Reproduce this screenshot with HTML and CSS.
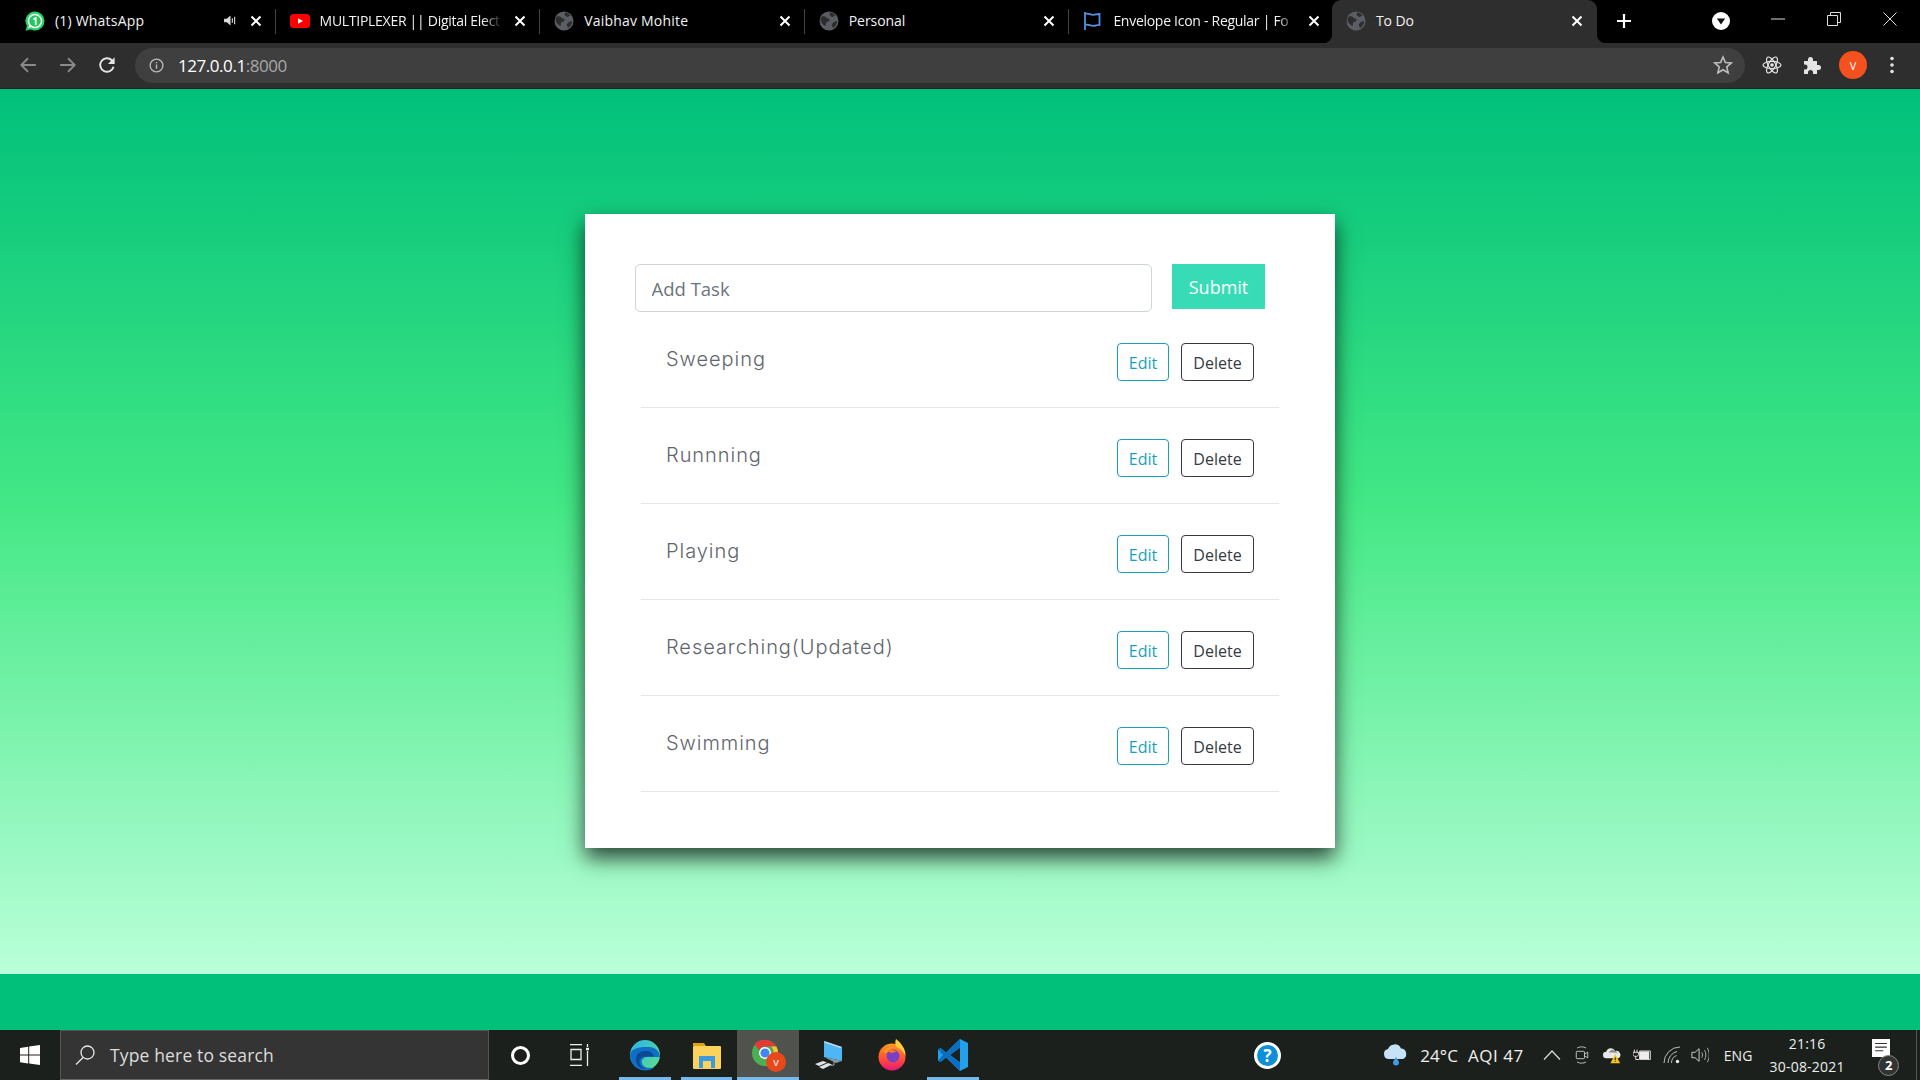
FILE: index.html
```html
<!DOCTYPE html>
<html lang="en">
<head>
<meta charset="utf-8">
<title>To Do</title>
<link rel="stylesheet" href="styles.css">
</head>
<body>
<svg class="defs" width="0" height="0" aria-hidden="true">
  <symbol id="globe" viewBox="0 0 20 20">
    <circle cx="10" cy="10" r="9.5" fill="#5a5d61"/>
    <path d="M3 5.5c2-.5 3.5.2 4.5 1.2s2.800.5 3 2-1.200 2-2.500 2.300-1 2.500-1.200 4C4.500 14.500 2 12 1.500 9c0-1.500.7-2.700 1.500-3.500zM11 1.500c2 0 4.500 1.500 5.500 3l-3 1.500c-1-.5-2.500-1-2.800-2.300zM18 10c.3 3-1.500 5.500-4 7l-1.300-3c.3-1.500 1.500-3 5.300-4z" fill="#2c2d2f"/>
  </symbol>
  <symbol id="close" viewBox="0 0 12 12">
    <path d="M1.500 1.500l9 9M10.500 1.500l-9 9" stroke="#fff" stroke-width="2" fill="none"/>
  </symbol>
</svg>
<div class="app">
  <header class="tabstrip">
    <div class="tab sep">
      <svg class="fav" viewBox="0 0 20 20"><path d="M10 .5a9.500 9.500 0 0 1 0 19c-1.500 0-3-.4-4.400-1.100L.5 19.800l1.400-4.900A9.500 9.500 0 0 1 10 .5z" fill="#27d366"/><path d="M10 2.800a7.200 7.200 0 1 1-3.700 13.400l-3 .8.8-2.900A7.200 7.200 0 0 1 10 2.800z" fill="#fff"/><circle cx="10" cy="10" r="5.800" fill="#25c45c"/></svg>
      <span class="wa-count">1</span>
      <span class="title wide">(1) WhatsApp</span>
      <svg class="speaker" viewBox="0 0 14 12"><path d="M0 4h3l4-3.500v11L3 8H0z" fill="#ddd"/><path d="M9 3.500v5M11.500 2v8" stroke="#ddd" stroke-width="1.200"/></svg>
      <svg class="x"><use href="#close"/></svg>
    </div>
    <div class="tab sep">
      <svg class="fav" viewBox="0 0 20 14"><rect width="20" height="14" rx="3.500" fill="#f00"/><path d="M8 4.200l5 2.800-5 2.800z" fill="#fff"/></svg>
      <span class="title fade tight">MULTIPLEXER || Digital Elect</span>
      <svg class="x"><use href="#close"/></svg>
    </div>
    <div class="tab sep">
      <svg class="fav"><use href="#globe"/></svg>
      <span class="title wide">Vaibhav Mohite</span>
      <svg class="x"><use href="#close"/></svg>
    </div>
    <div class="tab sep">
      <svg class="fav"><use href="#globe"/></svg>
      <span class="title">Personal</span>
      <svg class="x"><use href="#close"/></svg>
    </div>
    <div class="tab">
      <svg class="fav" viewBox="0 0 20 20"><path d="M2 1v18M2 3c3-1.500 5 .8 8 .8s4-1 6.500-.8v11c-2.500-.3-3.500.8-6.500.8s-5-2.300-8-.8" stroke="#5590e0" stroke-width="1.800" fill="none"/></svg>
      <span class="title fade tight">Envelope Icon - Regular | Fo</span>
      <svg class="x"><use href="#close"/></svg>
    </div>
    <div class="tab active">
      <svg class="fav"><use href="#globe"/></svg>
      <span class="title">To Do</span>
      <svg class="x"><use href="#close"/></svg>
    </div>
    <svg class="newtab" viewBox="0 0 16 16"><path d="M8 1v14M1 8h14" stroke="#fff" stroke-width="2.200"/></svg>
    <svg class="tabsearch" viewBox="0 0 18 18"><circle cx="9" cy="9" r="9" fill="#fff"/><path d="M4.800 6.500h8.400L9 12.500z" fill="#111"/></svg>
    <div class="winctl">
      <svg viewBox="0 0 14 14"><path d="M0 7h14" stroke="#ddd" stroke-width="1"/></svg>
      <svg viewBox="0 0 14 14"><path d="M.5 3.500h10v10H.5zM3.500 3.500v-3h10v10h-3" stroke="#ddd" stroke-width="1" fill="none"/></svg>
      <svg viewBox="0 0 14 14"><path d="M.5.500l13 13M13.500.500l-13 13" stroke="#ddd" stroke-width="1"/></svg>
    </div>
  </header>

  <nav class="toolbar">
    <svg class="nav-ic dim" viewBox="0 0 16 16"><path d="M15 8H2M8 2L2 8l6 6" stroke="#8a8a8a" stroke-width="1.600" fill="none"/></svg>
    <svg class="nav-ic dim" viewBox="0 0 16 16"><path d="M1 8h13M8 2l6 6-6 6" stroke="#8a8a8a" stroke-width="1.600" fill="none"/></svg>
    <svg class="nav-ic" viewBox="0 0 16 16"><path d="M13.800 9.500A6 6 0 1 1 12.300 3.800L14 6" stroke="#e4e4e4" stroke-width="1.700" fill="none"/><path d="M14.800 1v6h-6z" fill="#e4e4e4"/></svg>
    <div class="omnibox">
      <svg class="info" viewBox="0 0 16 16"><circle cx="8" cy="8" r="6.800" stroke="#bbb" stroke-width="1.400" fill="none"/><path d="M8 7v4.500M8 4.200v1.500" stroke="#bbb" stroke-width="1.500"/></svg>
      <span class="url">127.0.0.1<span class="port">:8000</span></span>
      <svg class="star" viewBox="0 0 20 20"><path d="M10 2l2.400 5.500 5.800.5-4.400 3.900 1.300 5.900-5.100-3.100-5.100 3.100 1.300-5.900L1.800 8l5.800-.5z" stroke="#bdbdbd" stroke-width="1.600" fill="none"/></svg>
    </div>
    <svg class="ext react" viewBox="0 0 20 20"><g stroke="#e4e4e4" stroke-width="1.200" fill="none"><ellipse cx="10" cy="10" rx="9" ry="3.600"/><ellipse cx="10" cy="10" rx="9" ry="3.600" transform="rotate(60 10 10)"/><ellipse cx="10" cy="10" rx="9" ry="3.600" transform="rotate(120 10 10)"/></g><circle cx="10" cy="10" r="1.800" fill="#e4e4e4"/></svg>
    <svg class="ext puzzle" viewBox="0 0 20 20"><path d="M2 6h4V4.500a2.500 2.500 0 0 1 5 0V6h4v4h1.500a2.500 2.500 0 0 1 0 5H15v4h-4v-1.500a2.500 2.500 0 0 0-5 0V19H2v-4.500h1a2.500 2.500 0 0 0 0-5H2z" fill="#e4e4e4"/></svg>
    <div class="avatar">V</div>
    <svg class="menu" viewBox="0 0 4 18"><circle cx="2" cy="2.500" r="1.800" fill="#e4e4e4"/><circle cx="2" cy="9" r="1.800" fill="#e4e4e4"/><circle cx="2" cy="15.500" r="1.800" fill="#e4e4e4"/></svg>
  </nav>

  <main class="page">
    <section class="stage">
      <div class="card">
        <form class="task-form">
          <input class="task-input" type="text" placeholder="Add Task">
          <button class="submit" type="button">Submit</button>
        </form>
        <ul class="task-list">
          <li class="task"><span class="task-name">Sweeping</span><button class="btn edit" type="button">Edit</button><button class="btn del" type="button">Delete</button></li>
          <li class="task"><span class="task-name">Runnning</span><button class="btn edit" type="button">Edit</button><button class="btn del" type="button">Delete</button></li>
          <li class="task"><span class="task-name">Playing</span><button class="btn edit" type="button">Edit</button><button class="btn del" type="button">Delete</button></li>
          <li class="task"><span class="task-name">Researching(Updated)</span><button class="btn edit" type="button">Edit</button><button class="btn del" type="button">Delete</button></li>
          <li class="task"><span class="task-name">Swimming</span><button class="btn edit" type="button">Edit</button><button class="btn del" type="button">Delete</button></li>
        </ul>
      </div>
    </section>
    <div class="foot"></div>
  </main>

  <footer class="taskbar">
    <div class="start"><svg viewBox="0 0 20 20"><path d="M0 2.900l8.200-1.200v7.900H0zM9.200 1.500L20 0v9.600H9.200zM0 10.500h8.200v7.900L0 17.200zM9.200 10.500H20V20L9.200 18.500z" fill="#fff"/></svg></div>
    <div class="search">
      <svg viewBox="0 0 20 20"><circle cx="12.500" cy="7.500" r="6.500" stroke="#e8e8e8" stroke-width="1.300" fill="none"/><path d="M8 12.500L1 19.500" stroke="#e8e8e8" stroke-width="1.300"/></svg>
      <span>Type here to search</span>
    </div>
    <div class="cortana"><span class="ring"></span></div>
    <div class="taskview"><svg viewBox="0 0 20 22"><path d="M0 .7h12M0 21.300h12M1 5.500h10v10H1zM17.500 0v3M17.500 7v15" stroke="#eee" stroke-width="1.300" fill="none"/><rect x="16" y="3.800" width="3" height="2.500" fill="#eee"/></svg></div>

    <div class="app-ic running">
      <svg viewBox="0 0 32 32"><defs><linearGradient id="eg" x1="0" y1="0" x2="1" y2="1"><stop offset="0" stop-color="#2bb3e8"/><stop offset="1" stop-color="#5ee08a"/></linearGradient></defs><circle cx="16" cy="16" r="15" fill="url(#eg)"/><path d="M1 16c0 9 7 15.500 15 15.500 4 0 7-1 9.500-3-5 1-11 .5-12.500-4-1-3 1-6 4-6.500H31C30 9 24 8 18 8 10 8 2 9 1 16z" fill="#0f6fc6"/><path d="M7 20c0-5 4-8 9-8 5 0 8 2 9 5.500H16c-4 .5-6 3-5.500 6.500.5 3 3 5 6.500 6C11 30 7 26 7 20z" fill="#0a4a94"/></svg>
    </div>
    <div class="app-ic running">
      <svg viewBox="0 0 32 32"><path d="M2 4h11l2 3H2z" fill="#e0a010"/><rect x="2" y="7" width="28" height="23" rx="1" fill="#fbd35c"/><path d="M8 17h16v12h-4v-7h-8v7H8z" fill="#3d9ade"/><rect x="12" y="22" width="8" height="7" fill="#fbd35c"/></svg>
    </div>
    <div class="app-ic running current">
      <svg viewBox="0 0 32 32"><circle cx="13" cy="14" r="13" fill="#4caf50"/><path d="M13 1a13 13 0 0 1 11.300 6.500H13a6.500 6.500 0 0 0-6 4L2.500 5A13 13 0 0 1 13 1z" fill="#e53935"/><path d="M24.300 7.500A13 13 0 0 1 14 27l6-10a6.500 6.500 0 0 0-1-9.500z" fill="#fbc02d"/><circle cx="13" cy="14" r="6" fill="#fff"/><circle cx="13" cy="14" r="4.600" fill="#4285f4"/></svg>
      <span class="chrome-badge">v</span>
    </div>
    <div class="app-ic">
      <svg viewBox="0 0 32 32"><path d="M10 2l18 6v14L10 18z" fill="#4fb6f5"/><path d="M10 2l18 6-2 1-15-5z" fill="#c8d4dc"/><path d="M10 18l18 4-6 2z" fill="#8a9aa5"/><path d="M20 22v4l-3 .5" stroke="#9aa" fill="none"/><path d="M1 25l8-3 4 1.500-8 3.500zM5 28l9-4 4 1.500-9 4.500z" fill="#dfe3e6"/></svg>
    </div>
    <div class="app-ic">
      <svg viewBox="0 0 32 32"><defs><linearGradient id="ff" x1="0" y1="0" x2="0" y2="1"><stop offset="0" stop-color="#ff9a1f"/><stop offset=".6" stop-color="#ff4b3a"/><stop offset="1" stop-color="#e8157b"/></linearGradient></defs><circle cx="16" cy="18" r="13.500" fill="url(#ff)"/><path d="M20 0c5 4 10 10 9.500 17-2-5-6-8-9-9C19 5 19 3 20 0z" fill="#ffc93c"/><path d="M4 9c1 2 3 3 5 2 2-2 5-3 7-2-3 0-4 2-3 3l-4 2z" fill="#ff9a1f"/><circle cx="17" cy="17" r="6.500" fill="#7b3fc4"/><path d="M12 12c3-2 7-1 9 1-2 0-4 0-5 1-1 0-3-1-4-2z" fill="#ff7a1f"/></svg>
    </div>
    <div class="app-ic running">
      <svg viewBox="0 0 32 32"><path d="M23 0l8 4v24l-8 4L9 18.500 3.500 23 1 21.500V10.500L3.500 9 9 13.500z" fill="#23a0ea"/><path d="M23 8.500L13 16l10 7.500z" fill="#1c2020"/><path d="M9 13.500L3.500 9 1 10.500l5 5.500-5 5.500L3.500 23 9 18.500l14 13.500V23.500L13 16l10-7.500V0z" fill="#0a6fc0"/></svg>
    </div>

    <div class="help"><span>?</span></div>

    <div class="weather">
      <svg viewBox="0 0 26 22"><path d="M6 15a5 5 0 0 1-1-9.900A7 7 0 0 1 18 4.500 5.500 5.500 0 0 1 20 15z" fill="#c6e2f7"/><path d="M13 13c-1.500 2.500-3 4-3 5.500a3 3 0 0 0 6 0c0-1.500-1.500-3-3-5.500z" fill="#3f9be6"/></svg>
      <span class="temp">24°C</span>
      <span class="aqi">AQI 47</span>
    </div>
    <div class="tray"><svg viewBox="0 0 18 10"><path d="M1 9.500l8-8.500 8 8.500" stroke="#ddd" stroke-width="1.200" fill="none"/></svg></div>
    <div class="tray"><svg viewBox="0 0 16 22"><path d="M2 2.500C5 .5 10 .5 13 2.500M2 19.500c3 2 8 2 11 0" stroke="#ddd" stroke-width="1" fill="none"/><rect x="1" y="6.500" width="10" height="9" rx="1" stroke="#ddd" fill="none"/><path d="M11 10l4-2.500v7L11 12" stroke="#ddd" fill="none"/></svg></div>
    <div class="tray"><svg viewBox="0 0 22 20"><path d="M4 14a4 4 0 0 1 0-8 6 6 0 0 1 11-1 5 5 0 0 1 4 9z" fill="#e8e8e8"/><path d="M7 7a5 5 0 0 1 8-2 5 5 0 0 1 3 3c-4-1-7-1-11-1z" fill="#8a8f90"/><path d="M15 9l6 11H9z" fill="#f5c518"/><path d="M15 13v3.500M15 17.500v1" stroke="#222" stroke-width="1.300"/></svg></div>
    <div class="tray"><svg viewBox="0 0 20 12"><path d="M7.500 1.500h11.800v9.500H7.500M7.500 1.500v9.500" stroke="#ddd" fill="none"/><rect x="7" y="2" width="11" height="8.500" fill="#eee"/><path d="M1.500 0v3M4.500 0v3M0 3h6v2.500c0 1-1 2-2 2H2c-1 0-2-1-2-2zM3 7.500V11h4" stroke="#eee" fill="none"/></svg></div>
    <div class="tray"><svg viewBox="0 0 18 18"><path d="M1 17A16 16 0 0 1 17 1M5 17A12 12 0 0 1 14 5.500M8.500 17a8 8 0 0 1 5-7.500" stroke="#bbb" fill="none"/><circle cx="14.500" cy="15.500" r="1.700" fill="#eee"/></svg></div>
    <div class="tray vol"><svg viewBox="0 0 20 18"><path d="M1 6h3.500L9 2v14l-4.500-4H1z" stroke="#ddd" fill="none"/><path d="M12 6c1 1.500 1 4.500 0 6M15 3.500c2 3 2 8 0 11M18 1c3 4.500 3 11.500 0 16" stroke="#bbb" fill="none"/></svg></div>
    <div class="lang">ENG</div>
    <div class="clock"><span>21:16</span><span>30-08-2021</span></div>
    <div class="notify">
      <svg viewBox="0 0 20 20"><path d="M0 0h20v20H0z" fill="#fff"/><path d="M3.500 5h13M3.500 9h13M3.500 13h9" stroke="#333" stroke-width="1.200"/></svg>
      <span class="badge">2</span>
    </div>
    <div class="desktop-edge"></div>
  </footer>
</div>
</body>
</html>
```
FILE: styles.css
```css
* { box-sizing: border-box; }
html, body { margin: 0; height: 100%; }
body { overflow: hidden; font-family: "Open Sans", "Noto Sans", sans-serif; background: #000; }
.defs { position: absolute; }
.app { display: flex; flex-direction: column; height: 1080px; width: 1920px; }

/* tab strip */
.tabstrip { height: 43px; flex: none; background: #000; display: flex; align-items: stretch; padding-left: 11px; color: #fff; }
.tab { width: 264.6px; flex: none; display: flex; align-items: center; padding: 0 14px 2px; position: relative; font-size: 14px; }
.tab.sep::after { content: ""; position: absolute; right: 0; top: 9px; height: 25px; width: 1px; background: #444; }
.fav { width: 20px; height: 20px; flex: none; margin-right: 10px; }
.wa-count { position: absolute; left: 14px; width: 20px; text-align: center; font-size: 10px; font-weight: 700; color: #fff; }
.title { flex: 1; min-width: 0; white-space: nowrap; letter-spacing: -.08px; color: #f2f2f2; }
.wide { letter-spacing: .2px; }
.tight { letter-spacing: -.28px; }
.fade { -webkit-mask-image: linear-gradient(90deg, #000 88%, rgba(0, 0, 0, .2) 96%, transparent 100%); mask-image: linear-gradient(90deg, #000 88%, rgba(0, 0, 0, .2) 96%, transparent 100%); }
.speaker { width: 13px; height: 11px; flex: none; margin-right: 5px; }
.x { width: 12px; height: 12px; flex: none; margin-left: 8px; margin-right: 0; }
.tab.active { background: #2e2e2e; border-radius: 9px 9px 0 0; margin-left: -2px; }
.tab.active::before, .tab.active::after { content: ""; position: absolute; bottom: 0; width: 9px; height: 9px; }
.tab.active::before { left: -9px; background: radial-gradient(circle at 0 0, #000 9px, #2e2e2e 9.500px); }
.tab.active::after { right: -9px; background: radial-gradient(circle at 100% 0, #000 9px, #2e2e2e 9.500px); }
.newtab { width: 16px; height: 16px; align-self: center; margin-left: 19px; margin-top: -1px; }
.tabsearch { width: 18px; height: 18px; align-self: center; margin-left: 80.500px; margin-top: -1px; }
.winctl { display: flex; align-items: center; margin-left: 40.500px; gap: 42px; margin-top: -6px; }
.winctl svg { width: 14px; height: 14px; }

/* toolbar */
.toolbar { height: 46px; flex: none; background: #2e2e2e; display: flex; align-items: center; padding: 0 0 1px 19px; border-bottom: 1px solid #1f1f1f; }
.nav-ic { width: 18px; height: 18px; flex: none; margin-right: 22px; }
.nav-ic.dim + .nav-ic.dim { margin-right: 21px; }
.omnibox { width: 1610px; height: 35px; border-radius: 18px; background: #3f3f3f; display: flex; align-items: center; padding-left: 14px; margin-left: -3px; flex: none; }
.info { width: 15px; height: 15px; flex: none; margin-right: 14px; }
.url { font-size: 17px; color: #fff; letter-spacing: -.45px; flex: 1; }
.port { color: #a8a8a8; }
.star { width: 20px; height: 20px; margin-right: 12px; flex: none; }
.ext { flex: none; width: 20px; height: 20px; }
.react { margin-left: 17px; }
.puzzle { margin-left: 20px; }
.avatar { width: 28px; height: 28px; border-radius: 50%; background: #f4511e; color: #fff; font-size: 11px; display: flex; align-items: center; justify-content: center; margin-left: 17px; flex: none; }
.menu { width: 4px; height: 18px; margin-left: 23px; flex: none; }

/* page */
.page { flex: 1; display: flex; flex-direction: column; min-height: 0; }
.stage { height: 885px; flex: none; padding-top: 125px; display: flex; justify-content: center; align-items: flex-start; background: linear-gradient(180deg, #00c07a 0%, #43e885 47%, #baffd9 100%); }
.foot { flex: 1; background: #00c07a; }
.card { width: 750px; height: 634px; background: #fff; padding: 50px; box-shadow: 0 10px 20px rgba(0, 0, 0, .72); }
.task-form { display: flex; align-items: flex-start; gap: 20px; }
.task-input { width: 517px; height: 48px; border: 1px solid #ced4da; border-radius: 5px; padding: 1px 15.500px 0; font: 18.500px "Open Sans", sans-serif; color: #495057; outline: none; background: #fff; }
.task-input::placeholder { color: #6c757d; opacity: 1; }
.submit { width: 93px; height: 45px; border: 0; background: #37dcb7; color: #fff; font: 18px "Open Sans", sans-serif; padding: 1px 0 0; }
.task-list { list-style: none; margin: 0 0 0 6px; padding: 0; width: 638px; }
.task { height: 96px; display: flex; align-items: flex-start; padding: 31px 25px 0; border-bottom: 1px solid #e6e7e9; }
.task-name { flex: 1; font: 300 20px/34px Inter, "Open Sans", sans-serif; letter-spacing: .95px; color: #5f666d; margin-top: -1px; }
.btn { height: 38px; border-radius: 4px; background: #fff; font: 16px "Open Sans", sans-serif; padding: 1px 0 0; }
.edit { width: 52px; border: 1px solid #17a2b8; color: #17a2b8; margin-right: 12px; }
.del { width: 73px; border: 1px solid #343a40; color: #343a40; }

/* taskbar */
.taskbar { height: 50px; flex: none; background: #1c201c; display: flex; align-items: center; color: #eee; }
.start { width: 60px; display: flex; justify-content: center; flex: none; }
.start svg { width: 20px; height: 20px; }
.search { width: 429px; height: 50px; flex: none; background: #343434; border: 1px solid #555; border-bottom-color: #666; display: flex; align-items: center; padding-left: 14px; gap: 15px; font-size: 17.500px; color: #dcdcdc; letter-spacing: .15px; }
.search svg { width: 20px; height: 20px; flex: none; }
.cortana { width: 62px; flex: none; display: flex; justify-content: center; }
.ring { width: 19px; height: 19px; border: 3px solid #fff; border-radius: 50%; }
.taskview { width: 58px; flex: none; display: flex; justify-content: center; }
.taskview svg { width: 20px; height: 22px; }
.app-ic { width: 61.700px; height: 50px; flex: none; display: flex; align-items: center; justify-content: center; position: relative; }
.taskview + .app-ic { margin-left: 5px; }
.app-ic svg { width: 32px; height: 32px; }
.app-ic.running::after { content: ""; position: absolute; left: 5px; right: 5px; bottom: 0; height: 3px; background: #76b9ed; }
.app-ic.current { background: #4f524d; }
.app-ic.current::after { left: 0; right: 0; }
.chrome-badge { position: absolute; right: 13px; top: 22px; width: 20px; height: 20px; border-radius: 50%; background: #e8481c; font-size: 11px; line-height: 19px; text-align: center; color: #fff; }
.help { margin-left: 270px; width: 27px; height: 27px; border-radius: 50%; background: #0f8fd6; border: 3px solid #fff; display: flex; align-items: center; justify-content: center; font-weight: 700; font-size: 17px; color: #fff; flex: none; }
.weather { display: flex; align-items: center; margin-left: 102px; width: 154px; flex: none; font-size: 17px; letter-spacing: .55px; color: #f0f0f0; white-space: nowrap; }
.weather svg { width: 26px; height: 22px; margin-right: 11px; flex: none; }
.temp { margin-right: 10px; letter-spacing: .1px; }
.tray { width: 30px; display: flex; justify-content: center; flex: none; }
.tray svg { width: 18px; height: 18px; }
.tray.vol { width: 26px; }
.lang { width: 49px; text-align: center; font-size: 14px; flex: none; letter-spacing: .1px; padding-left: 1px; }
.clock { width: 90px; display: flex; flex-direction: column; align-items: center; font-size: 14px; line-height: 23px; flex: none; letter-spacing: .2px; }
.notify { width: 64px; height: 50px; flex: none; display: flex; align-items: center; padding-left: 19px; position: relative; }
.notify svg { width: 20px; height: 18px; margin-top: -14px; }
.badge { position: absolute; left: 26px; top: 25px; width: 21px; height: 21px; border-radius: 50%; background: #333; border: 1px solid #888; font-size: 13px; font-weight: 700; text-align: center; line-height: 18px; color: #fff; }
.desktop-edge { flex: 1; align-self: stretch; border-left: 1px solid #555; }
```
